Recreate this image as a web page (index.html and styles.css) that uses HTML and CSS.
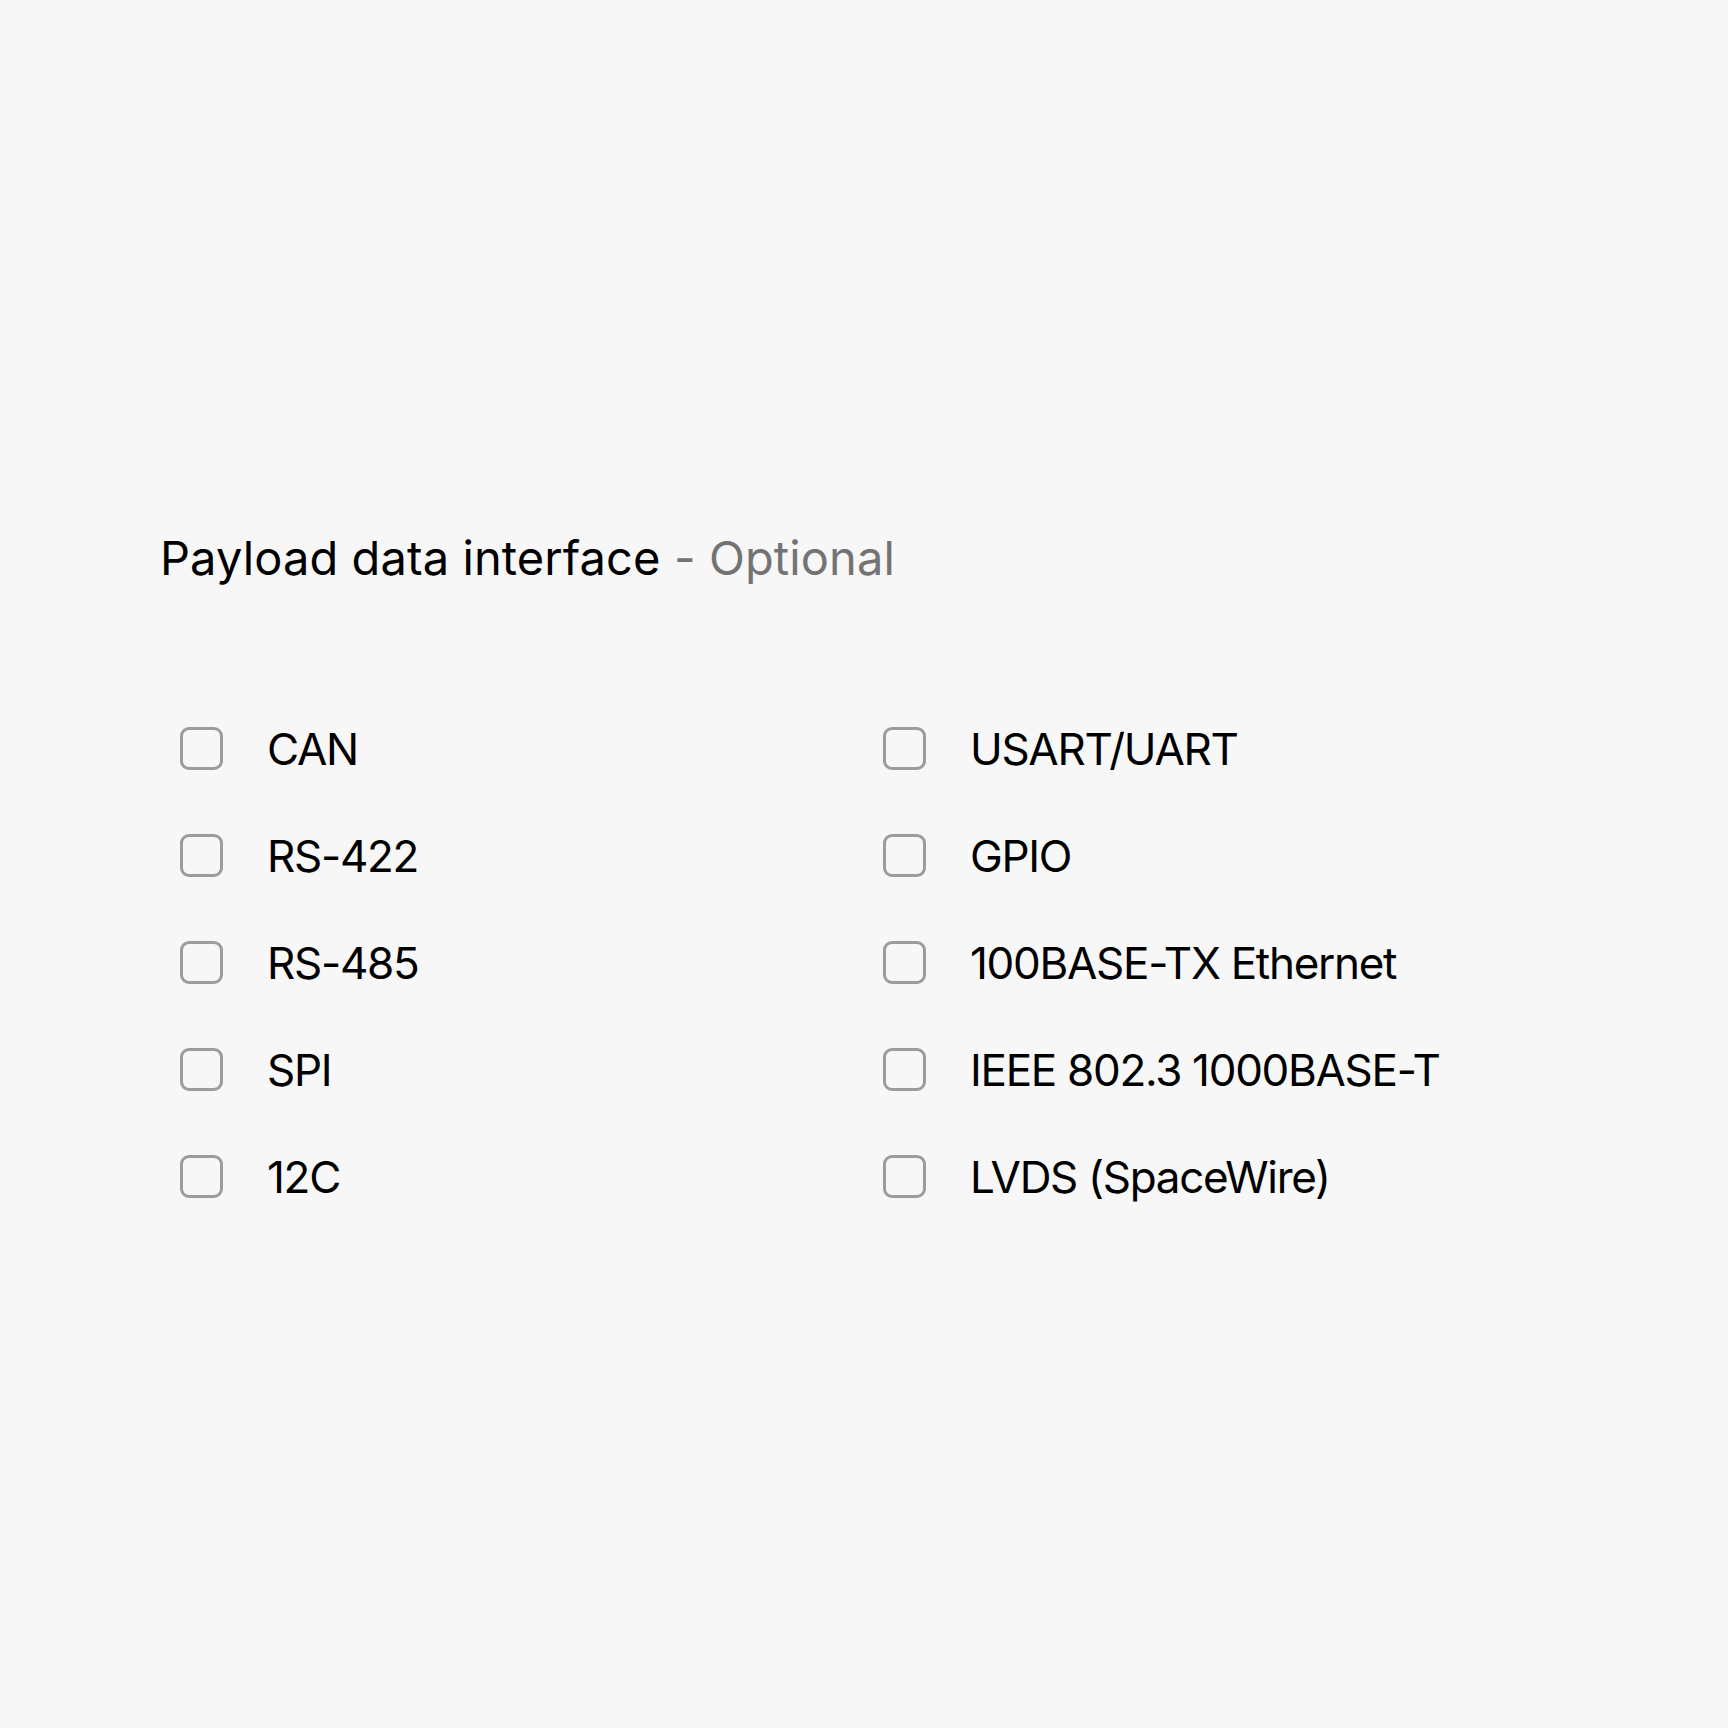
FILE: index.html
```html
<!DOCTYPE html>
<html lang="en">
<head>
<meta charset="utf-8">
<title>Payload data interface</title>
<link rel="stylesheet" href="styles.css">
</head>
<body>
<main class="page">
  <section class="field">
    <h2 class="field-title">Payload data interface <span class="optional">- Optional</span></h2>
    <div class="options">
      <label class="option"><span class="box"></span><span class="label">CAN</span></label>
      <label class="option"><span class="box"></span><span class="label">USART/UART</span></label>
      <label class="option"><span class="box"></span><span class="label">RS-422</span></label>
      <label class="option"><span class="box"></span><span class="label">GPIO</span></label>
      <label class="option"><span class="box"></span><span class="label">RS-485</span></label>
      <label class="option"><span class="box"></span><span class="label">100BASE-TX Ethernet</span></label>
      <label class="option"><span class="box"></span><span class="label">SPI</span></label>
      <label class="option"><span class="box"></span><span class="label">IEEE 802.3 1000BASE-T</span></label>
      <label class="option"><span class="box"></span><span class="label">12C</span></label>
      <label class="option"><span class="box"></span><span class="label">LVDS (SpaceWire)</span></label>
    </div>
  </section>
</main>
</body>
</html>
```

FILE: styles.css
```css
html, body {
  margin: 0;
  padding: 0;
  background: #f7f7f7;
}

body {
  font-family: Inter, "Noto Sans", "Liberation Sans", sans-serif;
  color: #000;
  width: 1728px;
  height: 1728px;
}

.page {
  padding: 529px 0 0 160px;
}

.field-title {
  margin: 0;
  font-size: 47px;
  line-height: 57px;
  font-weight: 400;
  color: #000;
  letter-spacing: 0.1px;
}

.optional {
  color: #737373;
}

.options {
  margin-top: 109px;
  display: grid;
  grid-template-columns: 703px 703px;
  grid-auto-rows: 107px;
  padding-left: 20px;
}

.option {
  display: flex;
  align-items: center;
  gap: 44px;
  font-size: 44px;
  letter-spacing: -1.3px;
}

.box {
  box-sizing: border-box;
  width: 43px;
  height: 43px;
  border: 3px solid #9c9c9c;
  border-radius: 9px;
  flex: none;
}

.label {
  line-height: 1;
}
```
